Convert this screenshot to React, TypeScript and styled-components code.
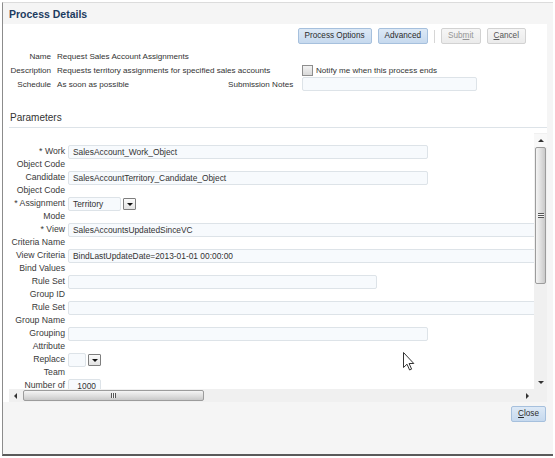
import React from 'react';
import styled, { createGlobalStyle } from 'styled-components';

const GlobalStyle = createGlobalStyle`
  html, body {
    margin: 0;
    padding: 0;
    background: #fff;
  }
  body {
    font-family: "Liberation Sans", Arial, sans-serif;
    font-size: 9px;
    color: #333;
  }
`;

const Dialog = styled.div`
  position: relative;
  box-sizing: border-box;
  width: 551px;
  height: 454px;
  margin: 2px 0 0 2px;
  border-left: 1px solid #8c8c8c;
  border-top: 1px solid #dcdcdc;
  border-bottom: 2px solid #5a5a5a;
  background: #f5f5f5;
  display: flex;
  flex-direction: column;
`;

const Header = styled.div`
  height: 21px;
  flex-shrink: 0;
  display: flex;
  align-items: center;
  padding-left: 6px;
  font-size: 10.5px;
  font-weight: bold;
  color: #1d3b5f;
`;

const Panel = styled.div`
  flex: 1;
  min-height: 0;
  margin-right: 6px;
  background: #fff;
  display: flex;
  flex-direction: column;
`;

const Toolbar = styled.div`
  display: flex;
  justify-content: flex-end;
  align-items: center;
  gap: 6px;
  padding: 4px 21px 0 0;
`;

const Button = styled.button<{ $primary?: boolean; $disabled?: boolean }>`
  box-sizing: border-box;
  height: 16px;
  padding: 0 6px;
  font-family: inherit;
  font-size: 8.2px;
  line-height: 14px;
  border-radius: 2px;
  border: 1px solid ${(p) => (p.$primary ? '#a6c0dd' : '#d2d2d2')};
  background: ${(p) =>
    p.$primary
      ? 'linear-gradient(#dde9f6, #c6d9ee)'
      : 'linear-gradient(#f6f6f6, #ebebeb)'};
  color: ${(p) => (p.$disabled ? '#959595' : p.$primary ? '#2b2b2b' : '#555')};
  cursor: default;

  u {
    text-decoration: underline;
  }
`;

const Separator = styled.span`
  width: 1px;
  height: 13px;
  background: #d6d6d6;
`;

const InfoGrid = styled.div`
  display: grid;
  grid-template-columns: 48px 165px 68px 175px;
  grid-auto-rows: 14px;
  column-gap: 6px;
  margin-top: 5px;
  align-items: center;
  font-size: 8.1px;
`;

const InfoLabel = styled.div`
  text-align: right;
  white-space: nowrap;
  padding-right: ${(p: { $pad?: number }) => p.$pad ?? 0}px;
`;

const InfoValue = styled.div<{ $span?: number }>`
  white-space: nowrap;
  grid-column: ${(p) => (p.$span ? `span ${p.$span}` : 'auto')};
`;

const CheckRow = styled.label`
  display: flex;
  align-items: center;
  gap: 3px;
  white-space: nowrap;
`;

const CheckBox = styled.span`
  box-sizing: border-box;
  width: 11px;
  height: 11px;
  border: 1px solid #8e8e8e;
  background: linear-gradient(#f2f2f2, #d9d9d9);
`;

const TextBox = styled.div<{ $width: number; $align?: string }>`
  box-sizing: border-box;
  flex-shrink: 0;
  width: ${(p) => p.$width}px;
  height: 14px;
  padding: 0 4px;
  line-height: 12px;
  font-size: 8.4px;
  border: 1px solid #dde3e8;
  border-radius: 2px;
  background: #f7fafd;
  white-space: nowrap;
  overflow: hidden;
  text-align: ${(p) => p.$align ?? 'left'};
  color: #333;
`;

const SectionTitle = styled.div`
  margin: 20px 0 0 6px;
  padding: 0 0 2px 1px;
  height: 14px;
  line-height: 14px;
  font-size: 10px;
  color: #333;
  border-bottom: 1px solid #dde3e8;
`;

const ScrollBox = styled.div`
  flex: 1;
  min-height: 0;
  margin: 5px 0 0 6px;
  display: grid;
  grid-template-columns: 1fr 13px;
  grid-template-rows: 1fr 13px;
`;

const Viewport = styled.div`
  overflow: hidden;
  padding-top: 12px;
`;

const FormRow = styled.div`
  display: flex;
  align-items: flex-start;
  height: 26px;
`;

const FieldLabel = styled.div`
  box-sizing: border-box;
  flex-shrink: 0;
  width: 59px;
  padding-right: 3px;
  text-align: right;
  line-height: 13px;
  font-size: 8.7px;
  color: #3a3a3a;
  white-space: nowrap;
`;

const SelectWrap = styled.div`
  display: flex;
  align-items: center;
  gap: 2px;
`;

const DropButton = styled.span`
  box-sizing: border-box;
  width: 13px;
  height: 12px;
  border: 1px solid #7e7e7e;
  border-radius: 1px;
  background: linear-gradient(#fbfbfb, #e2e2e2);
  display: flex;
  align-items: center;
  justify-content: center;

  &::after {
    content: '';
    border-left: 3px solid transparent;
    border-right: 3px solid transparent;
    border-top: 3px solid #111;
  }
`;

const VScroll = styled.div`
  display: flex;
  flex-direction: column;
  padding-top: 1px;
  background: #f0f0f0;
`;

const HScroll = styled.div`
  display: flex;
  align-items: center;
  background: #f0f0f0;
`;

const Corner = styled.div`
  background: #f0f0f0;
`;

const Arrow = styled.span<{ $dir: 'up' | 'down' | 'left' | 'right' }>`
  flex-shrink: 0;
  width: 13px;
  height: 13px;
  display: flex;
  align-items: center;
  justify-content: center;
  background: ${(p) => (p.$dir === 'up' ? '#f8f8f8' : 'transparent')};

  &::after {
    content: '';
    ${(p) =>
      p.$dir === 'up'
        ? 'border-left: 3px solid transparent; border-right: 3px solid transparent; border-bottom: 3px solid #333;'
        : p.$dir === 'down'
        ? 'border-left: 3px solid transparent; border-right: 3px solid transparent; border-top: 3px solid #333;'
        : p.$dir === 'left'
        ? 'border-top: 3px solid transparent; border-bottom: 3px solid transparent; border-right: 3px solid #333;'
        : 'border-top: 3px solid transparent; border-bottom: 3px solid transparent; border-left: 3px solid #333;'}
  }
`;

const VThumb = styled.div`
  box-sizing: border-box;
  height: 137px;
  margin: 0 1px;
  border: 1px solid #9c9c9c;
  border-radius: 2px;
  background: linear-gradient(to right, #f4f4f4, #dedede 55%, #c9c9c9);
  display: flex;
  align-items: center;
  justify-content: center;
`;

const HThumb = styled.div`
  box-sizing: border-box;
  width: 181px;
  height: 11px;
  margin-left: 1px;
  border: 1px solid #9c9c9c;
  border-radius: 2px;
  background: linear-gradient(#f4f4f4, #dedede 55%, #c9c9c9);
  display: flex;
  align-items: center;
  justify-content: center;
`;

const Grip = styled.span<{ $vertical?: boolean }>`
  width: ${(p) => (p.$vertical ? '6px' : '5px')};
  height: 5px;
  background: ${(p) =>
    p.$vertical
      ? 'repeating-linear-gradient(#555 0 1px, #f6f6f6 1px 2px)'
      : 'repeating-linear-gradient(to right, #555 0 1px, #f6f6f6 1px 2px)'};
`;

const Track = styled.div`
  flex: 1;
`;

const Footer = styled.div`
  height: 48px;
  flex-shrink: 0;
  display: flex;
  justify-content: flex-end;
  align-items: flex-start;
  padding: 4px 7px 0 0;
`;

const Cursor = styled.svg`
  position: absolute;
  left: 400px;
  top: 349px;
`;

type Param = {
  required?: boolean;
  label: [string, string];
  kind: 'text' | 'select' | 'number';
  width: number;
  value?: string;
};

const params: Param[] = [
  { required: true, label: ['Work', 'Object Code'], kind: 'text', width: 360, value: 'SalesAccount_Work_Object' },
  { label: ['Candidate', 'Object Code'], kind: 'text', width: 360, value: 'SalesAccountTerritory_Candidate_Object' },
  { required: true, label: ['Assignment', 'Mode'], kind: 'select', width: 53, value: 'Territory' },
  { required: true, label: ['View', 'Criteria Name'], kind: 'text', width: 480, value: 'SalesAccountsUpdatedSinceVC' },
  { label: ['View Criteria', 'Bind Values'], kind: 'text', width: 480, value: 'BindLastUpdateDate=2013-01-01 00:00:00' },
  { label: ['Rule Set', 'Group ID'], kind: 'text', width: 309 },
  { label: ['Rule Set', 'Group Name'], kind: 'text', width: 480 },
  { label: ['Grouping', 'Attribute'], kind: 'text', width: 360 },
  { label: ['Replace', 'Team'], kind: 'select', width: 18 },
  { label: ['Number of', 'Records'], kind: 'number', width: 33, value: '1000' },
];

export default function App() {
  return (
    <>
      <GlobalStyle />
      <Dialog>
        <Header>Process Details</Header>
        <Panel>
          <Toolbar>
            <Button $primary>Process Options</Button>
            <Button $primary>Advanced</Button>
            <Separator />
            <Button $disabled>
              Sub<u>m</u>it
            </Button>
            <Button>
              <u>C</u>ancel
            </Button>
          </Toolbar>

          <InfoGrid>
            <InfoLabel>Name</InfoLabel>
            <InfoValue $span={3}>Request Sales Account Assignments</InfoValue>

            <InfoLabel>Description</InfoLabel>
            <InfoValue $span={2}>Requests territory assignments for specified sales accounts</InfoValue>
            <CheckRow>
              <CheckBox />
              Notify me when this process ends
            </CheckRow>

            <InfoLabel>Schedule</InfoLabel>
            <InfoValue>As soon as possible</InfoValue>
            <InfoLabel $pad={3}>Submission Notes</InfoLabel>
            <TextBox $width={175} />
          </InfoGrid>

          <SectionTitle>Parameters</SectionTitle>

          <ScrollBox>
            <Viewport>
              {params.map((p, i) => (
                <FormRow key={i}>
                  <FieldLabel>
                    {p.required ? '* ' : ''}
                    {p.label[0]}
                    <br />
                    {p.label[1]}
                  </FieldLabel>
                  {p.kind === 'select' ? (
                    <SelectWrap>
                      <TextBox $width={p.width}>{p.value}</TextBox>
                      <DropButton />
                    </SelectWrap>
                  ) : (
                    <TextBox $width={p.width} $align={p.kind === 'number' ? 'right' : 'left'}>
                      {p.value}
                    </TextBox>
                  )}
                </FormRow>
              ))}
            </Viewport>
            <VScroll>
              <Arrow $dir="up" />
              <VThumb>
                <Grip $vertical />
              </VThumb>
              <Track />
              <Arrow $dir="down" />
            </VScroll>
            <HScroll>
              <Arrow $dir="left" />
              <HThumb>
                <Grip />
              </HThumb>
              <Track />
              <Arrow $dir="right" />
            </HScroll>
            <Corner />
          </ScrollBox>
        </Panel>
        <Footer>
          <Button $primary>
            <u>C</u>lose
          </Button>
        </Footer>
        <Cursor width="12" height="19" viewBox="0 0 12 19">
          <path
            d="M0.5 0.5 L0.5 15.5 L4 12.2 L6.6 18 L8.6 17.1 L6.1 11.5 L10.8 11.5 Z"
            fill="#fff"
            stroke="#333"
            strokeWidth="1"
            strokeLinejoin="round"
          />
        </Cursor>
      </Dialog>
    </>
  );
}
